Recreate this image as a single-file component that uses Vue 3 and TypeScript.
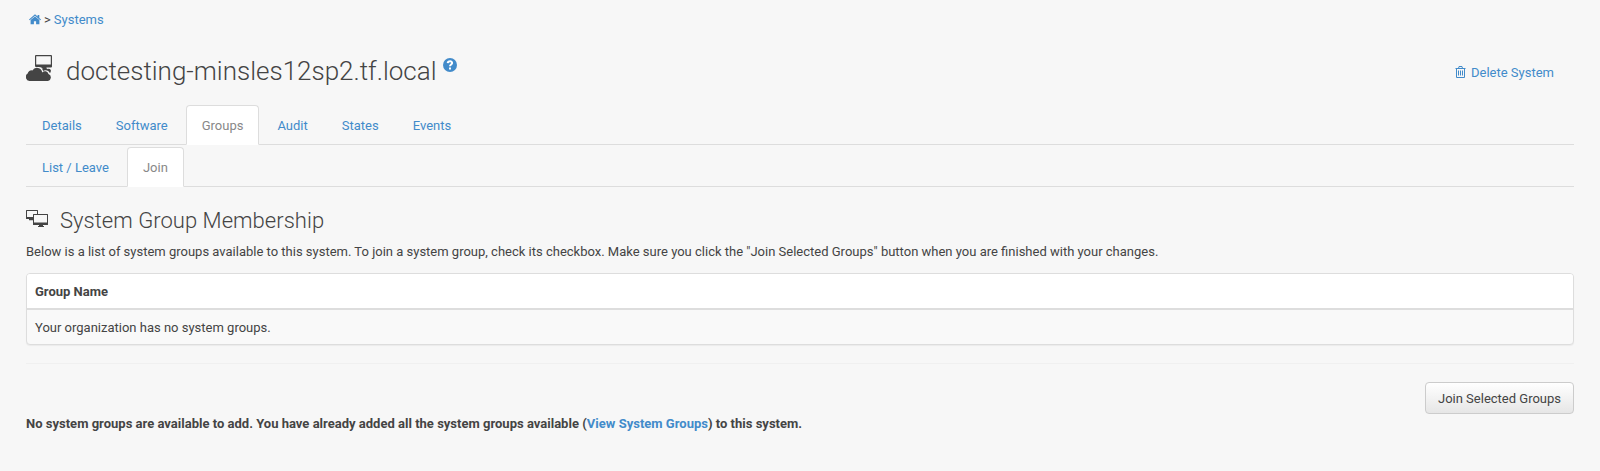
<script setup lang="ts">
const tabs = ['Details', 'Software', 'Groups', 'Audit', 'States', 'Events']
const subTabs = ['List / Leave', 'Join']
</script>

<template>
  <main class="page">
    <nav class="crumbs">
      <svg class="home" viewBox="0 0 12 11"><path fill="currentColor" d="M6 .2 8.600 2.400V1h1.700v2.900L12 5.400l-.7.9L6 1.800.7 6.300 0 5.400zM6 2.400 10.400 6.100V10.200H7.100V7.200H4.900V10.200H1.600V6.100z" /></svg>
      <span>&gt;</span><a>Systems</a>
    </nav>
    <header class="head">
      <svg class="sys" viewBox="0 0 26 26"><path fill="#444" fill-rule="evenodd" d="M10 0h15q1 0 1 1v10.500q0 1-1 1h-4.500v1h.7v1.500h-3.500q-1.500-3-5-3h-2.700q-1 0-1-1V1q0-1 1-1zM10.200 1.200V9.500H24.800V1.200z" /><path fill="#444" d="M4 26a4 4 0 0 1-2.300-7.400 3.700 3.700 0 0 1 4.700-3.200 5.300 5.300 0 0 1 9.800 2 3.700 3.700 0 0 1 6.300 1.700A3.600 3.600 0 0 1 22 26zM15.500 13.500a6 6 0 0 1 1.700 2.400 5 5 0 0 1 6.800 2.300q2-3-.2-4.200-1.500-.8-3 .2z" /></svg>
      <h1>doctesting-minsles12sp2.tf.local</h1>
      <svg class="help" viewBox="0 0 14 14"><circle cx="7" cy="7" r="7" fill="currentColor" /><path d="M4.700 5.200C5 2.700 9.300 2.700 9.100 5.100 9 6.500 7 6.600 7 8.300M7 9.600v1.900" fill="none" stroke="#fff" stroke-width="2" /></svg>
      <a class="delete"><svg class="trash" viewBox="0 0 11 12"><path fill="none" stroke="currentColor" d="M.5 2.500h10M3.500 2.500l.5-2h3l.5 2M1.500 3v8.500h8V3M3.500 4.500v5M5.500 4.500v5M7.500 4.500v5" /></svg>Delete System</a>
    </header>
    <ul class="tabs"><li v-for="t in tabs" :key="t" :class="{ active: t === 'Groups' }">{{ t }}</li></ul>
    <ul class="tabs second"><li v-for="t in subTabs" :key="t" :class="{ active: t === 'Join' }">{{ t }}</li></ul>
    <h2><svg class="group" viewBox="0 0 22 17"><path fill="#444" fill-rule="evenodd" d="M.5 0h11q.5 0 .5.500V4H11V1H1V7H7V10.200H3V9H.5Q0 9 0 8.500V.5Q0 0 .5 0zM7.500 4h14q.5 0 .5.500v10q0 .5-.5.500H17v1h1v1h-6v-1h1v-1H7.500Q7 15 7 14.500v-10Q7 4 7.500 4zM8 5v7.500h13V5z" /></svg>System Group Membership</h2>
    <p class="intro">Below is a list of system groups available to this system. To join a system group, check its checkbox. Make sure you click the "Join Selected Groups" button when you are finished with your changes.</p>
    <div class="panel"><div class="th">Group Name</div><div class="td">Your organization has no system groups.</div></div>
    <hr />
    <div class="actions"><button type="button">Join Selected Groups</button></div>
    <p class="note">No system groups are available to add. You have already added all the system groups available (<a>View System Groups</a>) to this system.</p>
  </main>
</template>

<style>
body { background: #f7f7f7; }
</style>
<style scoped>
* { box-sizing: border-box; }
.page { height: 471px; padding: 10px 26px 0; font: 13px/20px Roboto, sans-serif; color: #444; background: #f7f7f7; }
a, .home, .help { color: #428bca; }
.crumbs { display: flex; align-items: center; height: 20px; padding-left: 3px; gap: 3px; }
.home { width: 12px; height: 11px; margin-top: -1px; }
.head { display: flex; height: 50px; margin-top: 16px; align-items: center; }
.sys { width: 26px; height: 26px; margin: -6px 14px 0 0; }
h1 { margin: 0; font-size: 26px; line-height: 30px; font-weight: 300; }
.help { width: 14px; height: 14px; margin: -13px 0 0 6px; }
.delete { display: flex; align-items: center; margin: 3px 20px 0 auto; }
.trash { width: 11px; height: 12px; margin: -1px 5px 0 0; }
.tabs { display: flex; list-style: none; margin: 9px 0 0; padding: 0; height: 40px; border-bottom: 1px solid #ddd; gap: 2px; }
.tabs li { height: 40px; padding: 10px 15px 0; border: 1px solid transparent; border-radius: 4px 4px 0 0; color: #428bca; }
.tabs li.active { background: #fff; border-color: #ddd #ddd #fff; color: #888; }
.tabs.second { margin-top: 2px; }
h2 { display: flex; align-items: center; margin: 20px 0 0; height: 28px; font-size: 22px; font-weight: 300; letter-spacing: .03px; }
.group { width: 22px; height: 17px; margin: -5px 12px 0 0; }
.intro { margin: 7px 0 0; }
.panel { margin-top: 11px; height: 72px; border: 1px solid #ddd; border-radius: 4px; background: #f9f9f9; box-shadow: 0 1px 1px rgba(0,0,0,.05); }
.th { height: 36px; padding: 8px; background: #fff; font-weight: 700; border-bottom: 2px solid #ddd; border-radius: 3px 3px 0 0; }
.td { padding: 8px; }
hr { height: 1px; border: 0; background: #f0f0f0; margin: 18px 0; }
.actions { display: flex; justify-content: flex-end; height: 32px; }
button { width: 149px; height: 32px; padding: 2px 0 0; font: inherit; color: #444; border: 1px solid #ccc; border-radius: 4px; background: linear-gradient(#fff, #e6e6e6); }
.note { margin: 0; font-weight: 700; letter-spacing: .01px; }
</style>
